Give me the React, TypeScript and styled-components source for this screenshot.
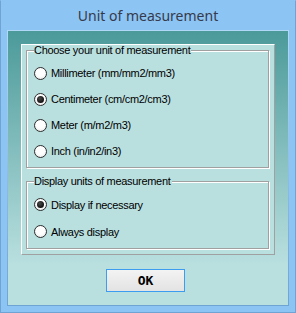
import React, { useState } from 'react'
import styled, { createGlobalStyle } from 'styled-components'

const GlobalStyle = createGlobalStyle`
  body {
    margin: 0;
    background: #ffffff;
  }
`

const Window = styled.div`
  box-sizing: border-box;
  width: 296px;
  height: 313px;
  display: flex;
  flex-direction: column;
  padding: 0 6px 6px;
  background: #8cc4f4;
  border: 1px solid #6ea3d4;
  border-top-color: #8cc4f4;
`

const TitleBar = styled.div`
  height: 29px;
  display: flex;
  justify-content: center;
  font-family: 'Noto Sans', 'Liberation Sans', sans-serif;
  font-size: 14px;
  line-height: 29px;
  color: #363a4a;
`

const Client = styled.div`
  box-sizing: border-box;
  height: 276px;
  display: flex;
  flex-direction: column;
  padding: 13px 13px 0;
  border: 1px solid;
  border-image: linear-gradient(#b2d8f7, #6ea4d4) 1;
  background: linear-gradient(to bottom, #4c9a9a 0%, #b9dfdf 85%);
`

const Panel = styled.div`
  display: flex;
  flex-direction: column;
  padding: 0 5px 5px 4px;
  background: #b9dfdf;
  border: 1px solid;
  border-color: #ffffff #a0a0a0 #a0a0a0 #ffffff;
`

const Group = styled.fieldset<{ $gapTop?: number }>`
  margin: ${({ $gapTop }) => $gapTop ?? 0}px 0 0;
  min-width: 0;
  padding: 4px 7px 3px;
  border: 1px solid #a0a0a0;
  box-shadow: inset 1px 1px 0 #ffffff, 1px 1px 0 #ffffff;
  font-family: 'Liberation Sans', Arial, sans-serif;
  font-size: 11px;
  letter-spacing: -0.3px;
  color: #000000;
`

const Legend = styled.legend`
  padding: 0 1px 0 0;
  line-height: 11px;
  background: #b9dfdf;
`

const Row = styled.label<{ $height: number }>`
  display: flex;
  align-items: center;
  gap: 4px;
  height: ${({ $height }) => $height}px;
  cursor: default;
`

const RadioCircle = styled.span<{ $checked: boolean }>`
  box-sizing: border-box;
  width: 13px;
  height: 13px;
  flex: none;
  display: flex;
  align-items: center;
  justify-content: center;
  border: 1px solid #2e2e2e;
  border-radius: 50%;
  background: radial-gradient(circle at 50% 40%, #ffffff 45%, #dedede 100%);

  &::after {
    content: '';
    display: ${({ $checked }) => ($checked ? 'block' : 'none')};
    width: 7px;
    height: 7px;
    border-radius: 50%;
    background: radial-gradient(circle at 40% 35%, #4a4a4a 0%, #111111 70%);
  }
`

const ButtonRow = styled.div`
  display: flex;
  padding: 14px 0 0 85px;
`

const OkButton = styled.button`
  box-sizing: border-box;
  width: 79px;
  height: 23px;
  padding: 0;
  border: 1px solid #3c9cf0;
  background: linear-gradient(#f3f3f3, #e3e3e3);
  font-family: 'DejaVu Sans Mono', 'Liberation Mono', monospace;
  font-weight: bold;
  font-size: 13px;
  color: #000000;
`

type Option = {
  name: string
  value: string
}

const units: Option[] = [
  { name: 'Millimeter (mm/mm2/mm3)', value: 'mm' },
  { name: 'Centimeter (cm/cm2/cm3)', value: 'cm' },
  { name: 'Meter (m/m2/m3)', value: 'm' },
  { name: 'Inch (in/in2/in3)', value: 'in' },
]

const displays: Option[] = [
  { name: 'Display if necessary', value: 'necessary' },
  { name: 'Always display', value: 'always' },
]

type RadioGroupProps = {
  legend: string
  options: Option[]
  value: string
  rowHeight: number
  gapTop?: number
  onChange: (value: string) => void
}

const RadioGroup: React.FC<RadioGroupProps> = function ({
  legend,
  options,
  value,
  rowHeight,
  gapTop,
  onChange,
}) {
  return (
    <Group $gapTop={gapTop}>
      <Legend>{legend}</Legend>
      {options.map((option) => (
        <Row
          $height={rowHeight}
          key={option.value}
          onClick={() => onChange(option.value)}
        >
          <RadioCircle $checked={option.value === value} />
          {option.name}
        </Row>
      ))}
    </Group>
  )
}

export default function App() {
  const [unit, setUnit] = useState('cm')
  const [display, setDisplay] = useState('necessary')

  return (
    <>
      <GlobalStyle />
      <Window>
        <TitleBar>Unit of measurement</TitleBar>
        <Client>
          <Panel>
            <RadioGroup
              legend="Choose your unit of measurement"
              options={units}
              value={unit}
              rowHeight={26}
              onChange={setUnit}
            />
            <RadioGroup
              legend="Display units of measurement"
              options={displays}
              value={display}
              rowHeight={27}
              gapTop={8}
              onChange={setDisplay}
            />
          </Panel>
          <ButtonRow>
            <OkButton>OK</OkButton>
          </ButtonRow>
        </Client>
      </Window>
    </>
  )
}
